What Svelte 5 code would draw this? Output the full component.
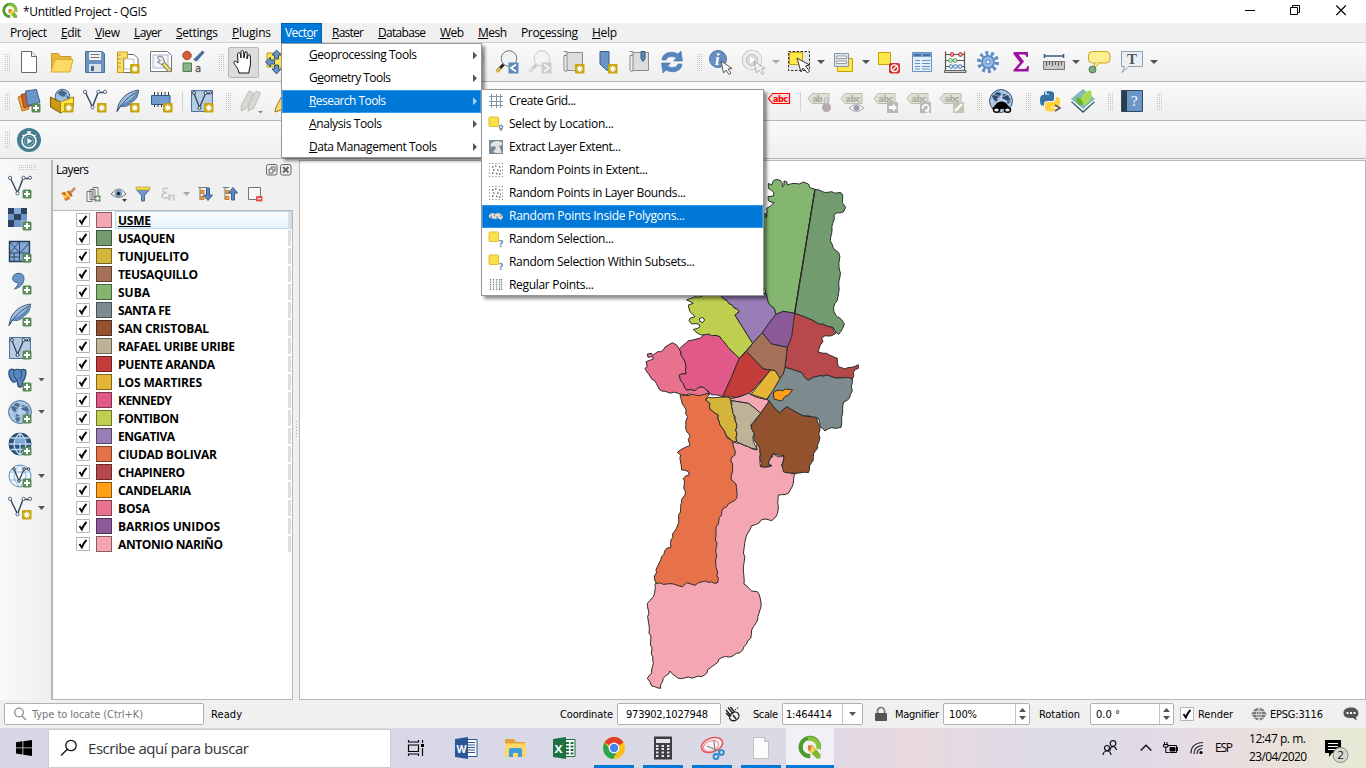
<script>
  // Sets a label to a given width by spreading the difference over its letters.
  function fit(node, width) {
    const natural = node.getBoundingClientRect().width;
    const count = Math.max(1, node.textContent.length - 1);
    node.style.letterSpacing = (width - natural) / count + 'px';
    node.style.width = width + 'px';
  }

  const menus = [
    ['Pro', 'j', 'ect', 37], ['', 'E', 'dit', 20], ['', 'V', 'iew', 25], ['', 'L', 'ayer', 28],
    ['', 'S', 'ettings', 42], ['', 'P', 'lugins', 39], ['Vect', 'o', 'r', 33], ['', 'R', 'aster', 32],
    ['', 'D', 'atabase', 48], ['', 'W', 'eb', 24], ['', 'M', 'esh', 29], ['Pro', 'c', 'essing', 57], ['', 'H', 'elp', 25]
  ];

  const vectorMenu = [
    ['', 'G', 'eoprocessing Tools', 108], ['G', 'e', 'ometry Tools', 82], ['', 'R', 'esearch Tools', 77],
    ['', 'A', 'nalysis Tools', 73], ['', 'D', 'ata Management Tools', 128]
  ];

  const researchMenu = [
    ['grid', 'Create Grid...', 67], ['selLoc', 'Select by Location...', 105], ['extent', 'Extract Layer Extent...', 112],
    ['rndPts', 'Random Points in Extent...', 139], ['rndPts', 'Random Points in Layer Bounds...', 177],
    ['inPoly', 'Random Points Inside Polygons...', 176], ['rndSel', 'Random Selection...', 105],
    ['rndSel', 'Random Selection Within Subsets...', 186], ['regular', 'Regular Points...', 85]
  ];

  const layers = [
    ['USME', '#f4a6b2', 33], ['USAQUEN', '#729b6f', 57], ['TUNJUELITO', '#d5b43c', 71], ['TEUSAQUILLO', '#a47158', 80],
    ['SUBA', '#85b66f', 32], ['SANTA FE', '#7d8b8f', 53], ['SAN CRISTOBAL', '#91522d', 91], ['RAFAEL URIBE URIBE', '#beb297', 117],
    ['PUENTE ARANDA', '#c43c39', 97], ['LOS MARTIRES', '#e5b636', 84], ['KENNEDY', '#e15989', 54], ['FONTIBON', '#becf50', 61],
    ['ENGATIVA', '#987db7', 57], ['CIUDAD BOLIVAR', '#e77148', 99], ['CHAPINERO', '#b7484b', 67], ['CANDELARIA', '#ff9e17', 73],
    ['BOSA', '#e8718d', 32], ['BARRIOS UNIDOS', '#8d5a99', 102], ['ANTONIO NARIÑO', '#f4a6b2', 105]
  ];

  const row1 = ['|0', 'page', 'folder', 'save', 'newLayout', 'layoutMgr', 'style', '|', 'hand', 'pan', '_165', 'zoomLast0', 'zoomLast', 'zoomNext',
    'newMap', 'bookmark', 'bookmarks', 'refresh', '|', 'identify', 'action', 'v-', 'select', 'v', 'selForm', 'v', 'deselect', 'table',
    'abacus', 'gear', 'sigma', 'measure', 'v', 'tip', 'textNote', 'v'];
  const row2 = ['|0', 'dataSource', 'geopackage', 'newShape', 'feather', 'chip', '/', 'virtual', '|', 'pencils', 'pencil', '_463', 'abcRed', '/',
    'abcPin', 'abcEye', 'abcMove', 'abcRotate', 'abcEdit', '|', 'metasearch', '|', 'python', 'leaf', '|', 'help', '|'];
  const side = [['sVector'], ['sRaster'], ['sMesh'], ['sComma'], ['sFeather'], ['sVirtual'], ['sPostgis', 1], ['sGlobe', 1], ['sWcs'], ['sWfs', 1], ['sNew', 1]];

  const districts = [
    ['#f4a6b2', '281,815 300,820 325,830 350,840 352,812 360,822 362,890 395,887 385,880 400,850 412,860 432,857 425,885 435,907 466,910 460,940 445,970 415,975 415,1010 408,1040 395,1052 375,1047 335,1067 320,1095 313,1130 310,1200 312,1242 335,1263 352,1265 363,1297 353,1350 335,1380 332,1405 312,1430 308,1440 280,1457 245,1463 185,1520 115,1525 90,1503 70,1525 62,1555 35,1548 22,1525 35,1510 38,1470 28,1380 22,1300 40,1280 45,1243 100,1200'],
    ['#e77148', '120,675 210,672 197,690 210,700 212,720 235,735 240,765 253,782 262,805 278,815 285,855 272,870 278,895 273,928 288,942 290,985 265,1002 245,1025 228,1080 230,1130 228,1180 235,1225 233,1238 187,1235 165,1246 140,1238 128,1250 100,1242 50,1241 43,1218 65,1160 80,1135 93,1132 93,1110 112,1068 122,1015 125,988 135,975 130,925 148,915 145,905 125,900 122,855 112,847 150,827 145,808 150,800 140,785 137,755 143,740 133,710'],
    ['#e8718d', '22,552 35,550 37,556 70,540 85,525 97,518 110,525 118,537 130,565 138,590 138,612 118,615 120,625 130,640 140,660 165,662 180,650 200,660 207,670 185,675 120,672 65,663 20,605 15,595 22,590 18,575 40,567 38,560 24,562'],
    ['#e15989', '118,537 130,525 145,512 180,505 190,495 205,492 215,497 240,500 252,515 265,533 298,565 275,620 248,680 215,675 200,660 180,650 165,662 140,660 130,640 120,625 118,615 138,612 138,590 130,565'],
    ['#becf50', '140,390 158,383 165,380 240,370 245,380 298,425 285,435 338,520 298,565 265,533 252,515 240,500 215,497 205,492 185,495 160,478 180,470 176,462 155,462 147,452 150,445 165,440 150,425 145,405 160,400'],
    ['#987db7', '240,370 245,380 298,425 285,435 338,520 367,488 387,460 408,433 403,415 385,397 378,370'],
    ['#85b66f', '385,40 395,45 400,32 410,28 422,32 427,50 432,47 432,33 440,35 442,45 462,40 478,42 490,36 505,42 510,53 525,58 464,430 430,424 408,433 403,415 385,397 378,370 368,350 368,135 382,128 380,115 392,108 402,98 385,92 384,80 400,78 402,68 385,55'],
    ['#729b6f', '525,58 548,65 603,68 608,75 607,98 617,112 610,126 582,134 578,160 575,190 571,212 580,235 596,248 598,270 597,290 600,320 596,345 594,380 585,400 582,425 590,440 605,450 613,462 608,475 596,493 588,487 578,472 550,462 538,463 520,452 492,440 464,430'],
    ['#b7484b', '464,430 492,440 520,452 538,463 550,462 578,472 582,485 588,490 575,497 555,497 545,505 549,515 541,525 534,546 560,550 580,560 592,565 595,590 615,597 635,592 655,584 655,595 640,607 637,627 610,623 575,620 560,615 540,617 520,622 505,631 494,622 485,608 455,598 435,592 442,532'],
    ['#7d8b8f', '435,592 455,598 485,608 494,622 505,631 520,622 540,617 560,615 575,620 610,623 637,627 634,650 637,662 628,685 612,695 608,720 605,740 603,772 575,773 555,783 540,770 535,745 515,740 490,738 465,725 440,710 418,729 400,710 388,693 380,690 400,655 423,620'],
    ['#8d5a99', '464,430 430,424 408,433 387,460 367,488 380,505 395,522 442,532 455,500'],
    ['#a47158', '338,520 367,488 380,505 395,522 442,532 435,592 430,612 420,625 405,602 370,597 320,545'],
    ['#c43c39', '320,545 370,597 392,600 330,670 290,682 248,680 275,620 298,565'],
    ['#e5b636', '392,600 405,602 420,625 400,660 380,688 333,673'],
    ['#f4a6b2', '270,687 300,680 325,670 350,682 385,690 385,697 362,730 345,715 325,700 275,692'],
    ['#d5b43c', '205,682 270,684 275,710 285,750 291,790 290,815 281,815 262,800 253,782 240,765 235,735 212,720 210,700 197,690'],
    ['#beb297', '275,692 325,700 345,715 362,730 333,765 343,790 340,815 352,838 325,830 300,820 290,815 291,790 285,750 275,710'],
    ['#91522d', '388,693 400,710 418,729 440,710 465,725 490,738 530,742 540,780 537,815 520,860 505,908 455,908 430,905 425,885 432,857 410,855 400,850 385,885 395,887 362,890 360,835 345,815 343,790 333,765 362,730'],
    ['#ff9e17', '400,668 410,662 422,660 428,663 436,657 458,660 445,675 435,680 425,693 412,690 402,687']
  ];

  // Adds a natural wobble to border segments; a shared edge gives the same points from both sides.
  function rough(points) {
    const p = points.split(' ').map((s) => s.split(',').map(Number));
    const out = [];
    p.forEach((a, i) => {
      const b = p[(i + 1) % p.length];
      out.push(a.join(','));
      const len = Math.hypot(b[0] - a[0], b[1] - a[1]);
      const inner = a[0] > 240 && b[0] > 240 && a[1] > 420 && a[1] < 740 && a[0] < 560 && b[0] < 560;
      if (len > 150 || inner) return;
      const flip = a[0] * 3 + a[1] > b[0] * 3 + b[1];
      const [s, e] = flip ? [b, a] : [a, b];
      const n = Math.floor(len / 9);
      const mid = [];
      for (let k = 1; k < n; k++) {
        const h = Math.sin(s[0] * 12.9 + s[1] * 78.2 + k * 37.7) * 43758.5;
        const d = (h - Math.floor(h) - 0.5) * 6;
        const t = k / n;
        mid.push((s[0] + (e[0] - s[0]) * t - ((e[1] - s[1]) / len) * d).toFixed(1) + ',' + (s[1] + (e[1] - s[1]) * t + ((e[0] - s[0]) / len) * d).toFixed(1));
      }
      if (flip) mid.reverse();
      out.push(...mid);
    });
    return out.join(' ');
  }

  const apps = [['word'], ['explorer'], ['excel'], ['chrome', 1], ['calc', 1], ['snip', 1], ['doc', 1], ['qgis', 2]];
</script>

{#snippet star()}
  <rect x="14" y="14" width="9.5" height="9.5" rx="1" fill="#c9a40c" />
  <path d="M18.75 15.5v6.6M15.6 18.8h6.4M16.6 16.6l4.4 4.4M21 16.6l-4.4 4.4" stroke="#fff" stroke-width="1.1" />
{/snippet}
{#snippet plus()}
  <rect x="14.5" y="14.5" width="9" height="9" rx="1.5" fill="#5a8c5a" />
  <path d="M19 16v6M16 19h6" stroke="#fff" stroke-width="2" />
{/snippet}
{#snippet vnodes()}
  <path d="M2.5 3.5 9.5 18 15 3.5h7" fill="none" stroke="#33475b" stroke-width="1.4" />
  <g fill="#fff" stroke="#53677a"><circle cx="2" cy="2.8" r="1.6" /><circle cx="9.5" cy="18.3" r="1.6" /><circle cx="15.5" cy="2.8" r="1.6" /><circle cx="22" cy="2.8" r="1.6" /></g>
{/snippet}
{#snippet quill()}
  <path d="M1 22.500C2 12 9 3 22.500 1c0 5-2 9-5 11l-3 1 1 1c-4 4-9 4-11 3z" fill="#9dbfe0" stroke="#35506e" stroke-width=".9" />
  <path d="M3 17C8 15 18 9 22 2c0 5-2 8-5 10l-3 1 1 1c-4 3.500-7.500 3.500-10 3z" fill="#5f8bbd" />
  <path d="M1 22.500Q8 10 21 3" stroke="#35506e" fill="none" />
{/snippet}
{#snippet cursor()}
  <path d="M11 10l2.500 12 2.500-3 3 4.500 2-1.500-3-4 4-.5z" fill="#fff" stroke="#555" />
{/snippet}
{#snippet world(c)}
  <circle cx="12" cy="12" r="11.400" fill="#a9c6e5" stroke={c} />
  <path d="M3 7l5-4 5 1-2 4-3 1 1 3-3 1zM14 5l5 1 3 6-3 3-2-4-4-2zM8 14l5 2-1 5-3 1-2-4z" fill={c} />
  <path d="M1 12h22M12 1v22M4 5q8 5 16 0M4 19q8-5 16 0" fill="none" stroke="#dceafa" stroke-width=".6" />
{/snippet}
{#snippet lens(dim)}
  <circle cx="14" cy="8.500" r="7.800" fill={dim ? '#f4f4f4' : '#eef2f2'} stroke={dim ? '#ccc' : '#777'} />
  <path d="M8.500 14.500 2 21.500" stroke={dim ? '#c8c8c8' : '#222'} stroke-width="3" /><path d="M5.500 18 1.500 22" stroke={dim ? '#ddd' : '#f3c63c'} stroke-width="2.400" />
{/snippet}
{#snippet tag(t)}
  <g transform="translate(0 3)"><path d="M0 6.500l4-5h17v10H4z" fill="#e0e0d4" stroke="#bdbdb1" /><text x="4.500" y="9.500" font-family="DejaVu Sans" font-weight="bold" font-size="8" fill="#aaaaa0" textLength={t.length * 5}>{t}</text></g>
{/snippet}
{#snippet qlogo()}
  <path d="M12.300 20.200A9.200 9.200 0 1 1 20.800 13" fill="none" stroke="#4f9b2a" stroke-width="4.200" />
  <path d="M10 2.900A9.200 9.200 0 0 1 20.800 13" fill="none" stroke="#8cc43c" stroke-width="4.200" />
  <path d="M10 9.500h5l7.500 9v4h-4L10 14z" fill="#7fb52f" /><path d="M10 9.500h4.500l3.500 4-4 4L10 14z" fill="#f3d25a" /><path d="M10 9.500h4l-2 6-2-2z" fill="#e8763c" />
{/snippet}

{#snippet icon(n)}
  <svg class="ic" viewBox="0 0 24 24" width="24" height="24">
    {#if n === 'page'}<path d="M4.500 1.500h10l5 5v16h-15z" fill="#fff" stroke="#666" /><path d="M14.500 1.500v5h5" fill="#eee" stroke="#666" />
    {:else if n === 'folder'}<path d="M1.500 21.500v-18h7l1.500 3h11v4" fill="#e8b93a" stroke="#c59a2a" /><path d="M1 22 5 9.500h18L20 22z" fill="#ffd965" stroke="#d8ab36" />
    {:else if n === 'save'}<path d="M2.500 1.500h17l2 2v19h-19z" fill="#6c93c0" stroke="#4c6f9b" /><path d="M6 2h12v8H6z" fill="#f2f2f2" /><path d="M7.500 4.500h9M7.500 7.500h9" stroke="#777" /><path d="M6 14h12v8H6z" fill="#dadfe5" /><path d="M8 16h3v5H8z" fill="#45668f" />
    {:else if n === 'newLayout'}<path d="M2 4.500h16l4 4v14H2z" fill="#fff" stroke="#666" /><path d="M8 9h10v10H8z" fill="#fff" stroke="#bbb" /><path d="M1.500 2h10v6H7.500v14.500h-6z" fill="#f8de70" stroke="#c59d18" /><path d="M2 5h3M2 9h3M2 13h3M2 17h3" stroke="#c59d18" />{@render star()}
    {:else if n === 'layoutMgr'}<path d="M1.500 1.500h17l4 4v16h-21z" fill="#fff" stroke="#777" /><path d="M4 5h15v13H4z" fill="#f2f6fc" stroke="#a4b9d4" /><path d="M13 12l8 9" stroke="#8a8040" stroke-width="4.500" /><path d="M14 13l7 8" stroke="#eddc8c" stroke-width="2.500" /><path d="M8 7.500q3-3 6 0l1.500 5-3 2-4-2.500 3-1.500z" fill="#eee" stroke="#777" />
    {:else if n === 'style'}<circle cx="5" cy="5.500" r="4.200" fill="#d35f38" stroke="#a04326" /><path d="M12.500 9.500l8-8 1 1-7 8z" fill="#5d88bd" stroke="#44699c" stroke-width="1.500" /><path d="M1 13h8.500v8.500H1z" fill="#86b488" stroke="#507a52" /><text x="13" y="21.500" font-family="DejaVu Sans" font-size="10" fill="#555" stroke="#555" stroke-width=".3">a</text>
    {:else if n === 'hand'}<path d="M7.500 21c-1-4-5-7-4.500-9 .5-1.500 2-1 4 1L6.500 4c0-2 2.500-2 2.700 0l.8 4V2c0-2 2.500-2 2.700 0l.3 6 .8-5c.2-2 2.500-1.500 2.400 0l-.2 6 1-3.500c.5-1.500 2.300-1 2.200.5C19.500 11 20 15 18 21v2H8z" fill="#fff" stroke="#111" />
    {:else if n === 'pan'}<g transform="translate(1.500 0)"><path d="M1.500 3h17v14h-17z" fill="#fbe35c" stroke="#c6a200" /><path d="M11 0l4.500 5H13v4h-4V5H6.500zM11 24l-4.500-5H9v-4h4v4h2.500zM0 12l5-5v3h4v4H5v3z" fill="#6a94c6" stroke="#345578" /></g>
    {:else if n === 'zoomLast' || n === 'zoomLast0'}{@render lens(n === 'zoomLast0')}{#if n === 'zoomLast'}<path d="M13.500 12.500h10v11h-10z" fill="#5e88bb" /><path d="M21 14.500l-5 3.500 5 3.500" fill="none" stroke="#fff" stroke-width="1.800" />{/if}
    {:else if n === 'zoomNext'}{@render lens(true)}<path d="M13.500 12.500h10v11h-10z" fill="#ccc" /><path d="M16 14.500l5 3.500-5 3.500" fill="none" stroke="#f6f6f6" stroke-width="1.800" />
    {:else if n === 'newMap' || n === 'bookmarks'}<path d="M5 2.500h16.500v18H5z" fill="#ddd" stroke="#8b8b8b" /><path d="M2.500 1.500h3.500v4h-3v15q1 1.500 3 .5V5.500" fill="#eee" stroke="#8b8b8b" />{#if n === 'newMap'}{@render star()}{:else}<path d="M14 1.500h4v7l-2 3-2-3z" fill="#5e88bb" stroke="#32567f" />{/if}
    {:else if n === 'bookmark'}<path d="M6 1.500h9v20l-4.500-3L6 14z" fill="#6a94c6" stroke="#3b5f8c" />{@render star()}
    {:else if n === 'refresh'}<path d="M2 10C2 3 11 0 18 4l3-3 1.500 10h-9l3-3C11 5 7 7 6 10zM22 14c0 7-9 10-16 6l-3 3L1.500 13h9l-3 3c5.500 3 9.500 1 10.500-2z" fill="#5686c2" stroke="#4673ac" stroke-width=".6" />
    {:else if n === 'identify'}<circle cx="9" cy="9" r="8.500" fill="#6590c4" stroke="#4f78ac" /><text x="6" y="14.500" font-family="Liberation Serif" font-size="16" font-style="italic" font-weight="bold" fill="#fff">i</text><g transform="translate(1 1)">{@render cursor()}</g>
    {:else if n === 'action'}<circle cx="10" cy="10" r="8.500" fill="none" stroke="#c6c6c6" stroke-width="3.600" stroke-dasharray="5 1.670" stroke-linecap="round" /><circle cx="10" cy="10" r="8.500" fill="#efefef" stroke="#efefef" stroke-width="1.800" stroke-dasharray="5 1.670" stroke-linecap="round" /><circle cx="10" cy="10" r="5.800" fill="#d9d9d9" stroke="#c6c6c6" /><path d="M8 6.500v7l5.500-3.500z" fill="#fff" /><g opacity=".4" transform="translate(1 1)">{@render cursor()}</g>
    {:else if n === 'select'}<path d="M1.500 1.500h21v19h-21z" fill="#e6e6e6" stroke="#333" stroke-dasharray="2.500 1.500" /><path d="M2.500 2.500h13v12h-13z" fill="#fde74c" stroke="#c6a200" /><path d="M10 8l4 14 2-4 4.500 5 2-2-4-5 4-1z" fill="#fff" stroke="#333" />
    {:else if n === 'selForm'}<path d="M5.500 8.500h15v13h-15z" fill="#fde74c" stroke="#c6a200" /><path d="M2.500 3.500h14v13h-14z" fill="#dfe6ec" stroke="#89949c" /><path d="M4.500 6h10v2.500h-10zM4.500 11h10v2.500h-10z" fill="#fff" stroke="#9a9a9a" />
    {:else if n === 'deselect'}<path d="M1.500 2.500h12v12h-12z" fill="#fde74c" stroke="#c6a200" /><rect x="12" y="13" width="11" height="10.500" rx="2" fill="#d2322d" /><circle cx="17.500" cy="18.200" r="3.300" fill="none" stroke="#fff" stroke-width="1.300" /><path d="M15.200 20.500l4.600-4.600" stroke="#fff" stroke-width="1.300" />
    {:else if n === 'table'}<path d="M2.500 2.500h19v19h-19z" fill="#e4eefa" stroke="#6493c4" /><path d="M3 3h18v4H3z" fill="#79a3d2" /><path d="M4 5h7M13 5h7" stroke="#345f93" stroke-width="1.500" /><path d="M5 10.500h5M12 10.500h8M5 13.500h5M12 13.500h8M5 16.500h5M12 16.500h8M5 19h5M12 19h8" stroke="#6b94c2" />
    {:else if n === 'abacus'}<path d="M2.500 1.500v20M21.500 1.500v20M2 4.500h20M2 10.500h20M2 16.500h20" stroke="#555" stroke-width="1.200" /><path d="M1.500 20.500h21.500v2H1.500z" fill="#ccc" stroke="#666" /><g stroke-width=".9"><g fill="#f0a0a0" stroke="#b22"><circle cx="9" cy="4.500" r="1.900" /><circle cx="17.500" cy="4.500" r="1.900" /></g><g fill="#c9efc9" stroke="#4a9a4a"><circle cx="7.500" cy="10.500" r="1.900" /><circle cx="12" cy="10.500" r="1.900" /></g><g fill="#cfe2f8" stroke="#4a7ab4"><circle cx="8" cy="16.500" r="1.900" /><circle cx="12.500" cy="16.500" r="1.900" /><circle cx="17" cy="16.500" r="1.900" /></g></g>
    {:else if n === 'gear'}<circle cx="12" cy="12" r="9" fill="none" stroke="#5a8cc9" stroke-width="4" stroke-dasharray="2.900 2.750" /><circle cx="12" cy="12" r="6.200" fill="#93b8e4" stroke="#4f82bf" stroke-width="1.500" /><circle cx="12" cy="12" r="2" fill="#fafafa" stroke="#4f82bf" />
    {:else if n === 'sigma'}<path d="M4.500 2h14.500v5h-1.500c-.5-2-1.500-2.500-4-2.500H9.500l5.500 7-6.500 7.500h6c3 0 3.500-1 4-3H20l-.5 5.500H4.500V20l6.500-7.500L4.500 4z" fill="#a010a0" />
    {:else if n === 'measure'}<path d="M2 6h20M2.500 4v4M21.500 4v4" stroke="#3d5a7d" stroke-width="1.600" /><path d="M1.500 11.500h21v8h-21z" fill="#c9c9c5" stroke="#777" /><path d="M4.500 12v4M7.500 12v3M10.500 12v4M13.500 12v3M16.500 12v4M19.500 12v3" stroke="#555" />
    {:else if n === 'tip'}<rect x="1.500" y="1.500" width="21.500" height="11.500" rx="4" fill="#fdee93" stroke="#cba41a" /><path d="M8 13l-1.500 6 6-6.200" fill="#fdee93" stroke="#cba41a" /><circle cx="5.500" cy="19.500" r="3.500" fill="#7cab7c" stroke="#567456" />
    {:else if n === 'textNote'}<path d="M1.500 1.500h21v15H9l-7 6 2.500-6h-3z" fill="#e8f0f6" stroke="#9a9fa3" /><text x="7" y="14" font-family="Liberation Serif" font-weight="bold" font-size="15" fill="#555">T</text>
    {:else if n === 'dataSource'}<path d="M1 8l6-2 5 14-7 2z" fill="#f0a83c" stroke="#a3600d" stroke-width=".8" /><path d="M4 5.500l9-2 2 13-8 2.500z" fill="#d2602c" stroke="#96370f" stroke-width=".8" /><path d="M8.500 2l11-1.500 3.500 13-12.500 3z" fill="#6a96c8" stroke="#3e648f" />{@render plus()}
    {:else if n === 'geopackage'}<circle cx="12.500" cy="7.500" r="7.300" fill="#9dc0e0" stroke="#48678c" /><path d="M7 4l5-3 5 3-3 4-3-1zM16 6l3 2-1 4z" fill="#48678c" /><path d="M.5 8l10 5v11L.5 18z" fill="#c99b10" stroke="#7b5c00" /><path d="M10.500 13l13-5v10l-13 6z" fill="#ffe34d" stroke="#a88400" />{@render star()}
    {:else if n === 'newShape' || n === 'sNew'}{@render vnodes()}{@render star()}
    {:else if n === 'feather'}{@render quill()}{@render star()}
    {:else if n === 'chip'}<path d="M5.500 3v15M9 3v15M12.500 3v15M16 3v15M19.500 3v15" stroke="#333" /><path d="M2.500 6.500h18.500v9H2.500z" fill="#6f9bcf" stroke="#32588a" />{@render star()}
    {:else if n === 'virtual' || n === 'sVirtual'}<path d="M1.500 1.500h21v21h-21z" fill="#b4cbe1" stroke="#50719a" /><path d="M4 4.500l5.500 14 6-14h5" fill="none" stroke="#33475b" stroke-width="1.300" /><g fill="#e6eef6" stroke="#33475b"><circle cx="4" cy="4" r="1.500" /><circle cx="9.500" cy="19" r="1.500" /><circle cx="15.500" cy="4" r="1.500" /><circle cx="20.500" cy="4" r="1.200" /></g>{#if n === 'virtual'}{@render star()}{:else}{@render plus()}{/if}
    {:else if n === 'pencils'}<g fill="#d8d8d5" stroke="#c0c0bb"><path d="M2.500 16L10 2l4.500 2-7 15.500-5.500 2.500z" /><path d="M10 16l7-14 4.500 2-7 15.500-5.500 2.500z" /></g><path d="M19 22h5l-2.500 2.500z" fill="#888" />
    {:else if n === 'pencil'}<path d="M4 18L12 3l5 3-8 15-6 2z" fill="#f7dc60" stroke="#8a7a30" />
    {:else if n === 'abcRed'}<g transform="translate(.5 3)"><path d="M0 6.500l4-5h17v10H4z" fill="#f9dcdc" stroke="#f00" stroke-width="1.200" /><text x="4.500" y="9.500" font-family="DejaVu Sans" font-weight="bold" font-size="8" fill="#f00" textLength="15">abc</text></g>
    {:else if n === 'abcPin'}{@render tag('ab')}<path d="M16.500 9h3.500v7h-3.500z" fill="#ddd" stroke="#bbb" /><circle cx="18.500" cy="18.500" r="4.500" fill="#b8aaaa" />
    {:else if n === 'abcEye'}{@render tag('abc')}<path d="M8 19q7.500-7 15 0-7.500 7-15 0z" fill="#eee" stroke="#aaa" /><circle cx="15.500" cy="19" r="2.800" fill="#99a" />
    {:else if n === 'abcMove'}{@render tag('abc')}<path d="M13 13h11v11H13z" fill="#b9b9bb" /><path d="M15 17h4v-2.500l4 4-4 4V20h-4z" fill="#fff" />
    {:else if n === 'abcRotate'}{@render tag('abc')}<path d="M13 13h11v11H13z" fill="#b9b9bb" /><path d="M16 20a3 3 0 1 1 4 1.500M18 21l3 2v-4" fill="none" stroke="#fff" stroke-width="1.500" />
    {:else if n === 'abcEdit'}{@render tag('abc')}<path d="M13 13h11v11H13z" fill="#c4c4b8" /><path d="M15 22l7-7" stroke="#fff" stroke-width="2.200" />
    {:else if n === 'metasearch'}{@render world('#2d4a6d')}<path d="M8 14l3-1.500h3l3 1.500 5 6H3z" fill="#000" /><ellipse cx="7.500" cy="21" rx="3" ry="2.300" fill="#eee" stroke="#000" stroke-width="1.500" /><ellipse cx="18.500" cy="21" rx="3" ry="2.300" fill="#eee" stroke="#000" stroke-width="1.500" />
    {:else if n === 'python'}<path d="M6 6V3.500Q7 2 11 2t5 2v6q0 2-2 2H9q-3 0-3 3v1.500H4Q2 16 2 11t3-5h6V5z" fill="#3673a5" /><path d="M18 8h2q2 1 2 5t-3 5h-6v1h4v2q-1 1.500-5 1.500T7 20v-5q0-2 2-2h5q4 0 4-3z" fill="#ffd43b" /><circle cx="8" cy="4" r="1" fill="#fff" /><path d="M17 16l5 3-5 3" fill="none" stroke="#555" stroke-width="1.500" />
    {:else if n === 'leaf'}<path d="M0 13l12-11 12 11-12 11z" fill="#2e5763" /><path d="M0 11.500L12 1l12 10.500L12 22z" fill="#fff" /><path d="M0 10L12 0l12 10-12 10z" fill="#7fb9bb" /><path d="M10 16Q8 4 20 1q3 10-6 15z" fill="#a9d950" /><path d="M9 16Q5 14 5 8q7 1 7 8z" fill="#68b32e" />
    {:else if n === 'help'}<path d="M1.500 1.500h21v21h-21z" fill="#6a96c8" stroke="#34475c" /><path d="M2 2h5v20H2z" fill="#2d3d50" /><text x="11" y="17" font-family="Liberation Serif" font-size="15" fill="#fff">?</text>
    {:else if n === 'sVector'}{@render vnodes()}{@render plus()}
    {:else if n === 'sRaster'}<path d="M0 1h19v19H0z" fill="#6c95c8" /><path d="M0 1h6v6H0zM13 1h6v6h-6zM6 7h7v6H6zM0 13h6v7H0z" fill="#2c4260" /><path d="M6 1h7v6H6zM13 13h6v7h-6z" fill="#a4bfdf" opacity=".5" />{@render plus()}
    {:else if n === 'sMesh'}<path d="M1.500 2.500h20v20h-20z" fill="#86aad3" stroke="#263e5c" stroke-width="1.400" /><path d="M2 14h20M11.500 3v20M2 3l9.500 11M12 14L22 3M2 14L11 3M2 18h10M6 14v8" fill="none" stroke="#2c4a70" />{@render plus()}
    {:else if n === 'sComma'}<path d="M9 2.500c6-1 8 3 6.500 8C14.500 14 11 17 6.500 18c3-3 4-5 3.500-6.500C3 12 3 3.500 9 2.500z" fill="#6c95c8" stroke="#3e6490" />{@render plus()}
    {:else if n === 'sFeather'}{@render quill()}{@render plus()}
    {:else if n === 'sPostgis'}<path d="M1 3q2-3 5-1 4-1.500 7 0 4-1.500 5 1 0 7-3 10l-1 5q-2 2-4 0l-1-6q-2 3-4 2Q0 9 1 3z" fill="#5a87bd" stroke="#274a75" stroke-width="1.200" /><path d="M6 2.500q-1 6 2.500 9M13 2.500q1.500 5-1 9" fill="none" stroke="#274a75" />{@render plus()}
    {:else if n === 'sGlobe'}{@render world('#4a6d96')}{@render plus()}
    {:else if n === 'sWcs'}<circle cx="12" cy="12" r="11" fill="#2e527e" stroke="#22405f" /><path d="M3 6h18M1 12h22M3 17.500h18M12 1v22M12 1q-12 11 0 22M12 1q12 11 0 22" fill="none" stroke="#c4dcf4" stroke-width="1.300" /><path d="M7 7h10v4H7z" fill="#7fa9d6" />{@render plus()}
    {:else if n === 'sWfs'}<circle cx="12" cy="12" r="11" fill="#f2f7fc" stroke="#5f8dc2" /><path d="M1 8h22M1 16h22M12 1q-12 11 0 22M12 1q12 11 0 22" fill="none" stroke="#8fb3dc" /><path d="M6 5l5 12 5-12h5" fill="none" stroke="#27394e" stroke-width="1.200" /><g fill="#fff" stroke="#27394e"><circle cx="6" cy="5" r="1.300" /><circle cx="11" cy="17" r="1.300" /><circle cx="16" cy="5" r="1.300" /><circle cx="20.500" cy="5" r="1.300" /></g>{@render plus()}
    {/if}
  </svg>
{/snippet}

{#snippet toolrow(items)}
  {#each items as n}
    {#if n === '|0'}<span class="grip first"></span>
    {:else if n === '|'}<span class="grip"></span>
    {:else if n === '/'}<span class="sep"></span>
    {:else if n[0] === '_'}<span class="space" style="width:{n.slice(1)}px"></span>
    {:else if n === 'v' || n === 'v-'}<span class="drop" class:dim={n === 'v-'}></span>
    {:else}<span class="tool" class:on={n === 'hand'}>{@render icon(n)}</span>{/if}
  {/each}
{/snippet}

{#snippet small(n)}
  <svg viewBox="0 0 16 16" width="16" height="16">
    {#if n === 'grid'}<path d="M1 3.500h14M1 8.500h14M1 12.500h14M3.500 1v14M8.500 1v14M12.500 1v14" stroke="#8498a8" />
    {:else if n === 'selLoc' || n === 'rndSel'}<rect x="1" y="1" width="9.500" height="9.500" rx="1" fill="#fbe04b" stroke="#dfbd35" />{#if n === 'selLoc'}<path d="M13 15.500q-4.500-6.500 0-7 4.500.5 0 7z" fill="#6e8da3" /><circle cx="13" cy="11" r="1" fill="#fff" />{:else}<text x="10.500" y="15.500" font-family="DejaVu Sans" font-size="8.500" font-weight="bold" fill="#6d8ea6">?</text>{/if}
    {:else if n === 'extent'}<path d="M1 1h14v14H1z" fill="#74899a" /><path d="M2.500 5Q7 0 14 3.500v2.500l-3 1 1 2 2 5H8l-3-1 3-4-1-2-4 1z" fill="#e4e4e0" />
    {:else if n === 'rndPts'}<path d="M1 1.500h14M1 14.500h14M1.500 1v14M14.500 1v14" stroke="#7f8f98" stroke-dasharray="1.200 2" /><path d="M4 5h1.500M7 4h1.500M11 5h1.500M5 8h1.500M9 8h1.500M12 9h1M4 11h1.500M8 11.500h1.500M11 12h1.500" stroke="#66756c" stroke-width="1.400" />
    {:else if n === 'inPoly'}<path d="M1 7l3-2 3 1 3-1 3 1 2 3-2 3-3-2-3 1-4-1-2-1z" fill="#dedfd8" stroke="#aab" stroke-width=".6" /><path d="M3 8.500h1M6 7.500h1M8.500 9h1M12 8h1" stroke="#56646c" stroke-width="1.500" />
    {:else if n === 'regular'}<path d="M2.500 2v12M5.500 2v12M8.500 2v12M11.500 2v12M13.500 2v12" stroke="#75857d" stroke-width="1.300" stroke-dasharray="1.400 1" />
    {/if}
  </svg>
{/snippet}

{#snippet check()}
  <svg class="check" viewBox="0 0 14 14" width="14" height="14"><path d="M.5.5h13v13H.5z" fill="#fff" stroke="#b6b6b6" /><path d="M3.500 7l2.300 3.500Q7.500 6 10.500 3" fill="none" stroke="#000" stroke-width="1.900" /></svg>
{/snippet}

<div class="window">
  <header class="title">
    <svg viewBox="0 0 24 24" width="16" height="16">{@render qlogo()}</svg>
    <span class="t" use:fit={124}>*Untitled Project - QGIS</span>
    <svg class="wc" viewBox="0 0 110 16" width="110" height="16" fill="none" stroke="#000"><path d="M5 8.500h10" /><path d="M50.500 5.500h7v7h-7zM52.500 5.500v-2h7v7h-2" /><path d="M96.300 3.500l9.500 9.500M105.800 3.500l-9.500 9.500" stroke-width="1.100" /></svg>
  </header>

  <nav class="menubar">
    {#each menus as m}
      <span class="menu" class:active={m[2] === 'r'}><span class="t" use:fit={m[3]}>{m[0]}<u>{m[1]}</u>{m[2]}</span></span>
    {/each}
  </nav>

  <div class="bar">{@render toolrow(row1)}</div>
  <div class="bar">{@render toolrow(row2)}</div>
  <div class="bar last">
    <span class="grip first"></span>
    <span class="tool">
      <svg class="ic" viewBox="0 0 24 24" width="24" height="24"><circle cx="12" cy="12" r="12" fill="#457d90" /><g fill="none" stroke="#fff"><circle cx="12" cy="13" r="7" stroke-width="1.500" /><circle cx="12" cy="13" r="4.500" stroke-width=".7" stroke-dasharray="1 1" /><path d="M10 4h4M12 4v2M5.500 7l1.500 1M18.500 7L17 8" stroke-width="1.500" /></g><path d="M10.300 10v6l5-3z" fill="#fff" /></svg>
    </span>
  </div>

  <main class="body">
    <aside class="side">
      <span class="hgrip"></span>
      {#each side as [n, d]}
        <span class="srow">{@render icon(n)}{#if d}<i class="tri"></i>{/if}</span>
      {/each}
    </aside>

    <section class="panel">
      <div class="phead">
        <span class="t" use:fit={33}>Layers</span>
        <svg viewBox="0 0 26 12" width="26" height="12" fill="none" stroke="#666"><rect x=".5" y=".5" width="10.500" height="10.500" rx="2" /><path d="M3 5h4v4H3zM5 4.500V3h4v4H7.500" /><rect x="14.500" y=".5" width="10.500" height="10.500" rx="2" /><path d="M17 3l5.500 5.500M22.500 3L17 8.500" stroke-width="2" /></svg>
      </div>
      <div class="ptools">
        <svg viewBox="0 0 16 16" width="16" height="16"><path d="M1 7l7-2 4 5-6 5z" fill="#f3cd42" /><path d="M1 7l4-1 1 4z" fill="#de5343" /><path d="M4 13l5-3 1 3-4 2z" fill="#e07a40" /><path d="M8 5l4 5" stroke="#a34d30" stroke-width="2" /><path d="M10 7l5-5" stroke="#d38b4f" stroke-width="2.500" /></svg>
        <svg viewBox="0 0 16 16" width="16" height="16"><path d="M2 5.500h5v10H2zM5 3.500h5v10H5zM8 1.500h5v10H8z" fill="#f7f7f7" stroke="#777" /><path d="M9.500 9.500h6v6h-6z" fill="#5a8c5a" /><path d="M12.500 10.500v4M10.500 12.500h4" stroke="#fff" stroke-width="1.300" /></svg>
        <svg viewBox="0 0 18 16" width="18" height="16"><path d="M1 8q8-10 15 0-7 7-15 0z" fill="#eee" stroke="#777" /><circle cx="8.500" cy="7.500" r="3.500" fill="#6c93bd" /><circle cx="8.500" cy="7.500" r="1.500" fill="#111" /><path d="M12 13h5l-2.500 3z" fill="#444" /></svg>
        <svg viewBox="0 0 16 16" width="16" height="16"><path d="M1.500 3.500l5 6V15h3V9.500l5-6z" fill="#6a96c8" stroke="#456b97" /><path d="M1 1h14v3H1z" fill="#f3dc52" stroke="#a89430" stroke-width=".6" /></svg>
        <svg viewBox="0 0 30 16" width="30" height="16"><path d="M8.500 2.500Q3 1 3 4t4 2.500Q2 7 2 10t6.500 1.500" fill="none" stroke="#c4c4c4" stroke-width="1.500" /><path d="M8 8.500h7v6h-2v-4h-2v4H8z" fill="#ccc" /><path d="M23 6h7l-3.500 4z" fill="#a4a4a4" /></svg>
        <svg viewBox="0 0 16 16" width="16" height="16"><path d="M1 1.500h9M3 2v12M3 6h4M3 12h3" stroke="#777" fill="none" /><path d="M4 4.500h3v3H4zM4 10.500h3v3H4z" fill="#f5b24d" stroke="#d07b10" /><path d="M9.500 2h3v7h3L11 14.500 6.500 9h3z" fill="#5e88bb" stroke="#39608e" /></svg>
        <svg viewBox="0 0 16 16" width="16" height="16"><path d="M1 1.500h6M3 2v12M3 6h3M3 12h3" stroke="#777" fill="none" /><path d="M4 4.500h3v3H4zM4 10.500h3v3H4z" fill="#f5b24d" stroke="#d07b10" /><path d="M9.500 14V7h-3L11 1.500 15.500 7h-3v7z" fill="#5e88bb" stroke="#39608e" /></svg>
        <svg viewBox="0 0 16 16" width="16" height="16"><path d="M1.500 1.500h12v12h-12z" fill="#f7f7f7" stroke="#777" /><rect x="9" y="10" width="6.500" height="5.500" rx="1" fill="#e04c4c" /><path d="M10.500 12.700h3.500" stroke="#fff" stroke-width="1.300" /></svg>
      </div>
      <div class="tree">
        {#each layers as [name, color, w], i}
          <div class="layer" class:sel={i === 0}>
            {@render check()}
            <i class="swatch" style="background:{color}"></i>
            <div class="name"><b class="t" use:fit={w}>{name}</b><i class="edge"></i></div>
          </div>
        {/each}
      </div>
    </section>

    <div class="split"><i></i></div>

    <section class="map">
      <svg viewBox="300 161 1065 538" width="1065" height="538">
        <g transform="translate(640 170) scale(.33333)" stroke="#2b2b2b" stroke-width="3" stroke-linejoin="round">
          {#each districts as [c, p]}<polygon points={rough(p)} fill={c} />{/each}
          <path d="M464 430L525 58" stroke-width="4" />
          <path d="M178 446l10-4 6 8-6 8-8-4z" fill="#fff" />
          <path d="M374 138l7-6-1 12z" fill="#85b66f" />
        </g>
      </svg>
    </section>
  </main>

  <footer class="status">
    <div class="box locate">
      <svg viewBox="0 0 14 14" width="14" height="14" fill="none" stroke="#8a8a8a" stroke-width="1.300"><circle cx="6" cy="5.500" r="4.300" /><path d="M9 9l4 4" /></svg>
      <span class="t grey" use:fit={111}>Type to locate (Ctrl+K)</span>
    </div>
    <span class="t ready" use:fit={31}>Ready</span>
    <span class="t" use:fit={53}>Coordinate</span>
    <div class="box coord"><span class="t" use:fit={82}>973902,1027948</span></div>
    <svg class="mouse" viewBox="0 0 16 16" width="16" height="16"><ellipse cx="9" cy="10.500" rx="5" ry="4" fill="#eee" stroke="#222" stroke-width="1.300" transform="rotate(-35 9 10)" /><path d="M1 4l5 6M3 1.500l5 6M5.500 1l4 5M1 7l4 4M8 9l3 4" stroke="#222" stroke-width="1.400" /><path d="M10 4l4-3" stroke="#222" stroke-dasharray="1.500 1" /></svg>
    <span class="t" use:fit={25}>Scale</span>
    <div class="box scale"><span class="t" use:fit={46}>1:464414</span><span class="cell"><i class="tri"></i></span></div>
    <svg class="lock" viewBox="0 0 14 16" width="14" height="16"><path d="M3.500 8V5a3.500 3.500 0 0 1 7 0v3" fill="none" stroke="#777" stroke-width="1.700" /><rect x="1" y="7" width="12" height="8" rx="1" fill="#555" /></svg>
    <span class="t" use:fit={44}>Magnifier</span>
    <div class="box mag"><span class="t" use:fit={28}>100%</span><span class="cell spin"><i class="up"></i><i class="tri"></i></span></div>
    <span class="t" use:fit={41}>Rotation</span>
    <div class="box rot"><span class="t" use:fit={24}>0.0 °</span><span class="cell spin"><i class="up"></i><i class="tri"></i></span></div>
    <span class="rc">{@render check()}</span>
    <span class="t" use:fit={35}>Render</span>
    <svg class="crs" viewBox="0 0 16 16" width="16" height="16"><path d="M0 8l4-4.500h8L16 8l-4 5H4z" fill="#999" /><circle cx="8" cy="8" r="6.300" fill="#777" /><path d="M2 5.500h12M1 8.500h14M3 11.500h10M8 2v12M8 2q-5 6 0 12M8 2q5 6 0 12" fill="none" stroke="#eee" stroke-width=".7" /></svg>
    <span class="t" use:fit={53}>EPSG:3116</span>
    <svg class="msg" viewBox="0 0 16 16" width="16" height="16"><path d="M8 1.500c4 0 7.500 2 7.500 5.500 0 2-1 3.500-2.500 4.300l1 3.200-4-2.500C4 12.500.5 11 .5 7S4 1.500 8 1.500z" fill="#555" /><path d="M3.500 7h2M7 7h2M10.500 7h2" stroke="#fff" stroke-width="1.800" /></svg>
  </footer>

  <div class="taskbar">
    <span class="start"><svg viewBox="0 0 16 16" width="16" height="16"><path d="M0 2.200l6.500-.9v6.200H0zM7.300 1.200L16 0v7.500H7.300zM0 8.300h6.500v6.200L0 13.600zM7.300 8.300H16V16l-8.700-1.200z" /></svg></span>
    <div class="search">
      <svg viewBox="0 0 18 18" width="18" height="18" fill="none" stroke="#111" stroke-width="1.300"><circle cx="11" cy="6.500" r="5.200" /><path d="M7.300 10.300L1 16.500" /></svg>
      <span class="t" use:fit={161}>Escribe aquí para buscar</span>
    </div>
    <span class="tv"><svg viewBox="0 0 18 16" width="18" height="16" fill="none" stroke="#000" stroke-width="1.200"><path d="M1.500 5h10v6.500h-10zM1.500 0v2h10V0M1.500 16v-2h10v2M15.500 0v3M15.500 8v8" /><path d="M14 4h3v3h-3z" fill="#000" stroke="none" /></svg></span>
    <div class="apps">
      {#each apps as [n, s]}
        <span class="app" class:open={s === 1} class:cur={s === 2}>
          <svg viewBox="0 0 24 24" width="24" height="24">
            {#if n === 'word' || n === 'excel'}
              {@const c = n === 'word' ? '#2b5797' : '#1e7145'}
              <path d="M12 3.500h11v17H12z" fill="#fff" stroke={c} />
              {#if n === 'word'}<path d="M14 6.500h7M14 9h7M14 11.500h7M14 14h7M14 16.500h7" stroke={c} />{:else}<path d="M14 6h3v2h-3zM18.500 6h3v2h-3zM14 9.500h3v2h-3zM18.500 9.500h3v2h-3zM14 13h3v2h-3zM18.500 13h3v2h-3zM14 16.500h3v2h-3zM18.500 16.500h3v2h-3z" fill={c} />{/if}
              <path d="M1 3l13-2v22L1 21z" fill={c} />
              <text x="2.500" y="16.500" font-family="Open Sans" font-weight="bold" font-size="11" fill="#fff" textLength={n === 'word' ? 10 : 8} lengthAdjust="spacingAndGlyphs">{n === 'word' ? 'W' : 'X'}</text>
            {:else if n === 'explorer'}<path d="M2 3h9l2 3h9v14H2z" fill="#e8a33d" /><path d="M2 7.500h21V21H2z" fill="#ffd76b" /><path d="M6 21v-7q0-2 2-2h9q2 0 2 2v7h-4v-4h-5v4z" fill="#3e9bdc" />
            {:else if n === 'chrome'}<circle cx="12" cy="12" r="11" fill="#fbc116" /><path d="M12 12L2.500 6.500a11 11 0 0 1 19 0z" fill="#e33b2e" /><path d="M12 12h-5L2.500 6.500A11 11 0 0 0 11 23l5-9z" fill="#2da44f" /><circle cx="12" cy="12" r="5.400" fill="#fff" /><circle cx="12" cy="12" r="4.200" fill="#4285f4" />
            {:else if n === 'calc'}<path d="M3 .5h18v23H3z" fill="#3d3d42" /><path d="M5 3h14v4H5z" fill="#e4e3ee" /><path d="M5 10h2.500M10.500 10h2.500M16 10h2.500M5 13h2.500M10.500 13h2.500M16 13h2.500M5 16.500h2.500M10.500 16.500h2.500M16 16.500h2.500M5 20h2.500M10.500 20h2.500M16 20h2.500" stroke="#e4e3ee" stroke-width="1.800" />
            {:else if n === 'snip'}<ellipse cx="12" cy="9" rx="11" ry="7" fill="#f8f0f2" stroke="#e25b5b" stroke-width="1.500" transform="rotate(-20 12 9)" /><ellipse cx="11" cy="10" rx="8" ry="5" fill="none" stroke="#e88" transform="rotate(-20 11 10)" /><path d="M14 4l1 12M7 10l12 5" stroke="#888" stroke-width="1.200" /><g fill="none" stroke="#2a84d0" stroke-width="1.800"><circle cx="16" cy="20.500" r="2.500" /><circle cx="21.500" cy="16.500" r="2.300" /></g>
            {:else if n === 'doc'}<path d="M4.500 1.500h11l4 4v17h-15z" fill="#fbfbfb" stroke="#c0c0c0" /><path d="M15.500 1.500v4h4" fill="#ddd" stroke="#c0c0c0" />
            {:else}{@render qlogo()}{/if}
          </svg>
        </span>
      {/each}
    </div>
    <div class="tray">
      <svg viewBox="0 0 16 18" width="16" height="18" fill="none" stroke="#111" stroke-width="1.200"><circle cx="11" cy="4.500" r="2.800" /><path d="M8 12q0-4 3-4.500 3 .5 3.500 3.500" /><circle cx="5" cy="9" r="2.500" /><path d="M1 16q.5-4 4-4t4 4" /></svg>
      <svg class="chev" viewBox="0 0 12 12" width="12" height="12" fill="none" stroke="#111" stroke-width="1.400"><path d="M.7 8.500L6 3.300l5.300 5.200" /></svg>
      <svg class="bat" viewBox="0 0 16 12" width="16" height="12" fill="none" stroke="#000"><path d="M4.500 3.500h9v7h-7" /><path d="M14.500 5v4" /><path d="M7 5.500h5v3.500H7z" fill="#000" /><path d="M1.500 0v2M4 0v2M.5 2.500h4.500v2.500H.5zM2.800 5v5.500H6" /></svg>
      <svg class="wifi" viewBox="0 0 14 14" width="14" height="14" fill="none" stroke="#222" stroke-width="1.200"><path d="M1 12.500Q1 2 13 1.500M4 13Q4 5 13 4.500M7 13Q7 8 12.500 7.500" /><circle cx="11" cy="11.500" r="1.600" fill="#000" stroke="none" /></svg>
      <span class="t esp" use:fit={18}>ESP</span>
      <div class="clock"><span class="t" use:fit={57}>12:47 p. m.</span><span class="t" use:fit={58}>23/04/2020</span></div>
      <svg class="act" viewBox="0 0 26 24" width="26" height="24"><path d="M1 1h16v13H8l-3 4v-4H1z" /><path d="M4 4.500h10M4 7.500h10M4 10.500h7" stroke="#fff" /><circle cx="16.500" cy="16" r="7.500" fill="#d8d8d0" stroke="#888" /><text x="13.300" y="20.200" font-family="Open Sans" font-size="11.500" fill="#111">2</text></svg>
    </div>
  </div>

  <div class="popup vector">
    {#each vectorMenu as m, i}
      <div class="item" class:hot={i === 2}><span class="t" use:fit={m[3]}>{m[0]}<u>{m[1]}</u>{m[2]}</span><i class="right"></i></div>
    {/each}
  </div>
  <div class="popup research">
    {#each researchMenu as [n, label, w], i}
      <div class="item" class:hot={i === 5}>{@render small(n)}<span class="t" use:fit={w}>{label}</span></div>
    {/each}
  </div>
</div>

<style>
  :global(body) { margin: 0; overflow: hidden; }
  .window { position: relative; width: 1366px; height: 768px; display: flex; flex-direction: column; background: #f0f0f0; font: 12px/16px "Open Sans", sans-serif; color: #000; overflow: hidden; }
  .window :global(svg) { display: block; flex: none; overflow: visible; }
  .t { display: inline-block; white-space: nowrap; flex: none; }
  u { text-underline-offset: 1px; }
  .title { height: 23px; background: #fff; display: flex; align-items: center; padding: 0 0 0 2px; }
  .title .t { margin-left: 5px; }
  .title svg:first-child { margin-top: -1px; }
  .wc { margin-left: auto; margin-right: 16px; margin-top: -4px; }
  .menubar { height: 19px; display: flex; padding-left: 3px; border-bottom: 1px solid #d2d2d2; }
  .menu { padding: 2px 7px 0; height: 18px; }
  .menu.active { background: #0078d7; color: #fff; padding: 1px 3px 0; margin: 0 3px; border: 1px solid #0062b1; }
  .bar { height: 38px; display: flex; align-items: center; background: linear-gradient(#fafafa, #eeeeee); border-bottom: 1px solid #b6b6b6; }
  .bar.last { height: 37px; }
  .tool { width: 33px; height: 31px; display: flex; align-items: center; justify-content: center; flex: none; }
  .tool.on { box-sizing: border-box; width: 31px; margin: 0 1px; background: #dcdcdc; border: 1px solid #b5b5b5; border-radius: 2px; }
  .grip { width: 16px; height: 17px; flex: none; background: linear-gradient(#f4f4f4, #f4f4f4) 0 0 / 0 0 no-repeat; }
  .grip::before { content: ""; display: block; width: 5px; height: 17px; margin-left: 8px; background: repeating-linear-gradient(transparent 0 1px, #f4f4f4 1px 2px), repeating-linear-gradient(90deg, #c4c4c4 0 1px, transparent 1px 2px); }
  .grip.first { width: 12.500px; }
  .grip.first::before { margin-left: 5px; }
  .sep { width: 7.500px; height: 19px; flex: none; background: linear-gradient(#d2d2d2, #d2d2d2) 4px 0 / 1px 100% no-repeat; }
  .space { flex: none; }
  .drop { width: 12px; height: 4px; flex: none; background: #555; clip-path: polygon(1.500px 0, 9.500px 0, 5.500px 4px); }
  .drop.dim { background: #aaa; }
  .tri { width: 7px; height: 4px; background: #555; clip-path: polygon(0 0, 100% 0, 50% 100%); }
  .up { width: 7px; height: 4px; background: #555; clip-path: polygon(0 100%, 100% 100%, 50% 0); }
  .body { height: 541px; display: flex; }
  .side { width: 51px; background: linear-gradient(90deg, #fafafa, #eee); display: flex; flex-direction: column; }
  .hgrip { height: 5px; width: 17px; margin: 6px 0 1px 19px; background: repeating-linear-gradient(transparent 0 1px, #f4f4f4 1px 2px), repeating-linear-gradient(90deg, #c4c4c4 0 1px, transparent 1px 2px); }
  .srow { height: 32.100px; padding-left: 8px; display: flex; align-items: center; gap: 6px; }
  .panel { width: 240px; margin-top: 1px; border-left: 2px solid #b8b8b8; display: flex; flex-direction: column; }
  .phead { height: 20px; padding: 0 1px 0 3px; display: flex; align-items: center; justify-content: space-between; }
  .ptools { height: 28px; padding-bottom: 2px; display: flex; align-items: center; padding-left: 7px; gap: 9px; }
  .ptools svg:nth-child(3), .ptools svg:nth-child(5) { margin-right: -2px; }
  .tree { flex: 1; background: #fff; border: 1px solid #b8b8b8; border-left: 0; }
  .layer { height: 18px; display: flex; align-items: center; padding-left: 23px; }
  .swatch { box-sizing: border-box; width: 16px; height: 16px; margin-left: 6px; border: 1px solid #00000070; }
  .name { flex: 1; height: 18px; margin-left: 3px; padding-left: 3px; display: flex; align-items: center; justify-content: space-between; box-sizing: border-box; }
  .name .t { font-size: 12px; font-weight: 700; padding-top: 2px; }
  .edge { width: 3px; height: 16px; background: #dedede; margin-right: 1px; }
  .sel .name { border: 1px solid #b8d8f0; background: linear-gradient(#fafdff, #e7f3fd); padding-left: 2px; }
  .sel .name .edge { margin-right: 0; }
  .sel b { text-decoration: underline; text-underline-offset: 1px; }
  .split { width: 6px; display: flex; align-items: center; justify-content: center; }
  .split i { width: 1px; height: 17px; background: repeating-linear-gradient(#b0b0b0 0 1px, transparent 1px 3px); }
  .map { width: 1065px; height: 538px; margin-top: 1px; background: #fff; border: 1px solid #b8b8b8; overflow: hidden; flex: none; }
  .status { height: 28px; display: flex; align-items: center; padding-left: 4px; font: 11px/16px "DejaVu Sans Condensed", "DejaVu Sans", sans-serif; }
  .status .t { padding-top: 2px; }
  .box { box-sizing: border-box; height: 22px; background: #fff; border: 1px solid #b0b0b0; border-radius: 2px; display: flex; align-items: center; flex: none; }
  .locate { width: 200px; padding-left: 8px; gap: 5px; }
  .grey { color: #777; }
  .ready { margin: 0 318px 0 7px; }
  .coord { width: 104px; margin-left: 4px; padding-left: 8px; }
  .mouse { margin: 0 12px 0 4px; }
  .scale { width: 81px; margin-left: 4px; padding-left: 3px; justify-content: space-between; }
  .cell { width: 19px; height: 20px; border-left: 1px solid #c4c4c4; display: flex; align-items: center; justify-content: center; }
  .spin { flex-direction: column; gap: 4px; width: 13px; }
  .lock { margin: 0 7px 0 11px; }
  .mag { width: 87px; margin: 0 9px 0 4px; padding-left: 5px; justify-content: space-between; }
  .rot { width: 84px; margin-left: 10px; padding-left: 5px; justify-content: space-between; }
  .rc { margin: 0 4px 0 6px; }
  .crs { margin: 0 3px 0 18px; }
  .msg { margin-left: 20px; }
  .taskbar { height: 40px; display: flex; align-items: center; background: linear-gradient(90deg, #d6d6e6 0, #dad9e6 50%, #ddd7e4 60%, #e8d9df 67%, #dddbe7 76%, #e0dae8 84%, #eadde0 90%, #e9e2d9 94%, #e7ead6 99%); }
  .start { width: 48px; display: flex; justify-content: center; }
  .search { box-sizing: border-box; width: 343px; height: 39px; background: #fff; border: 1px solid #ccc; display: flex; align-items: center; padding-left: 11px; gap: 10px; font-size: 15px; line-height: 20px; color: #333; }
  .tv { width: 50.500px; display: flex; justify-content: center; }
  .apps { display: flex; height: 40px; }
  .app { box-sizing: border-box; width: 49.200px; height: 40px; display: flex; align-items: center; justify-content: center; }
  .app.open { background: linear-gradient(#0078d7, #0078d7) 50% 100% / 40px 3px no-repeat; }
  .app.cur { background: linear-gradient(#0078d7, #0078d7) 50% 100% / 48px 3px no-repeat, #f1f0f6; width: 48px; }
  .tray { margin-left: auto; display: flex; align-items: center; height: 40px; }
  .chev { margin-left: 22px; }
  .bat { margin-left: 11px; }
  .wifi { margin-left: 11px; }
  .esp { margin-left: 11px; }
  .clock { margin-left: 16px; width: 58px; display: flex; flex-direction: column; align-items: flex-start; line-height: 18px; }
  .act { margin: 5px 16px 0 17px; }
  .popup { position: absolute; box-sizing: border-box; background: #fff; border: 1px solid #979797; box-shadow: 3px 3px 3px #00000070; }
  .vector { left: 281px; top: 43px; width: 201px; height: 115px; }
  .research { left: 481px; top: 89px; width: 283px; height: 207px; }
  .item { height: 23px; box-sizing: border-box; display: flex; align-items: center; border: 1px solid transparent; }
  .vector .item { padding: 0 3px 0 26px; justify-content: space-between; height: 22.900px; }
  .research .item { padding-left: 5px; gap: 5px; height: 22.950px; }
  .hot { background: #0078d7; border-color: #2f9bf0; color: #fff; }
  .right { width: 4px; height: 8px; background: #555; clip-path: polygon(0 0, 100% 50%, 0 100%); }
  .hot .right { background: #a8d0f4; }
</style>
